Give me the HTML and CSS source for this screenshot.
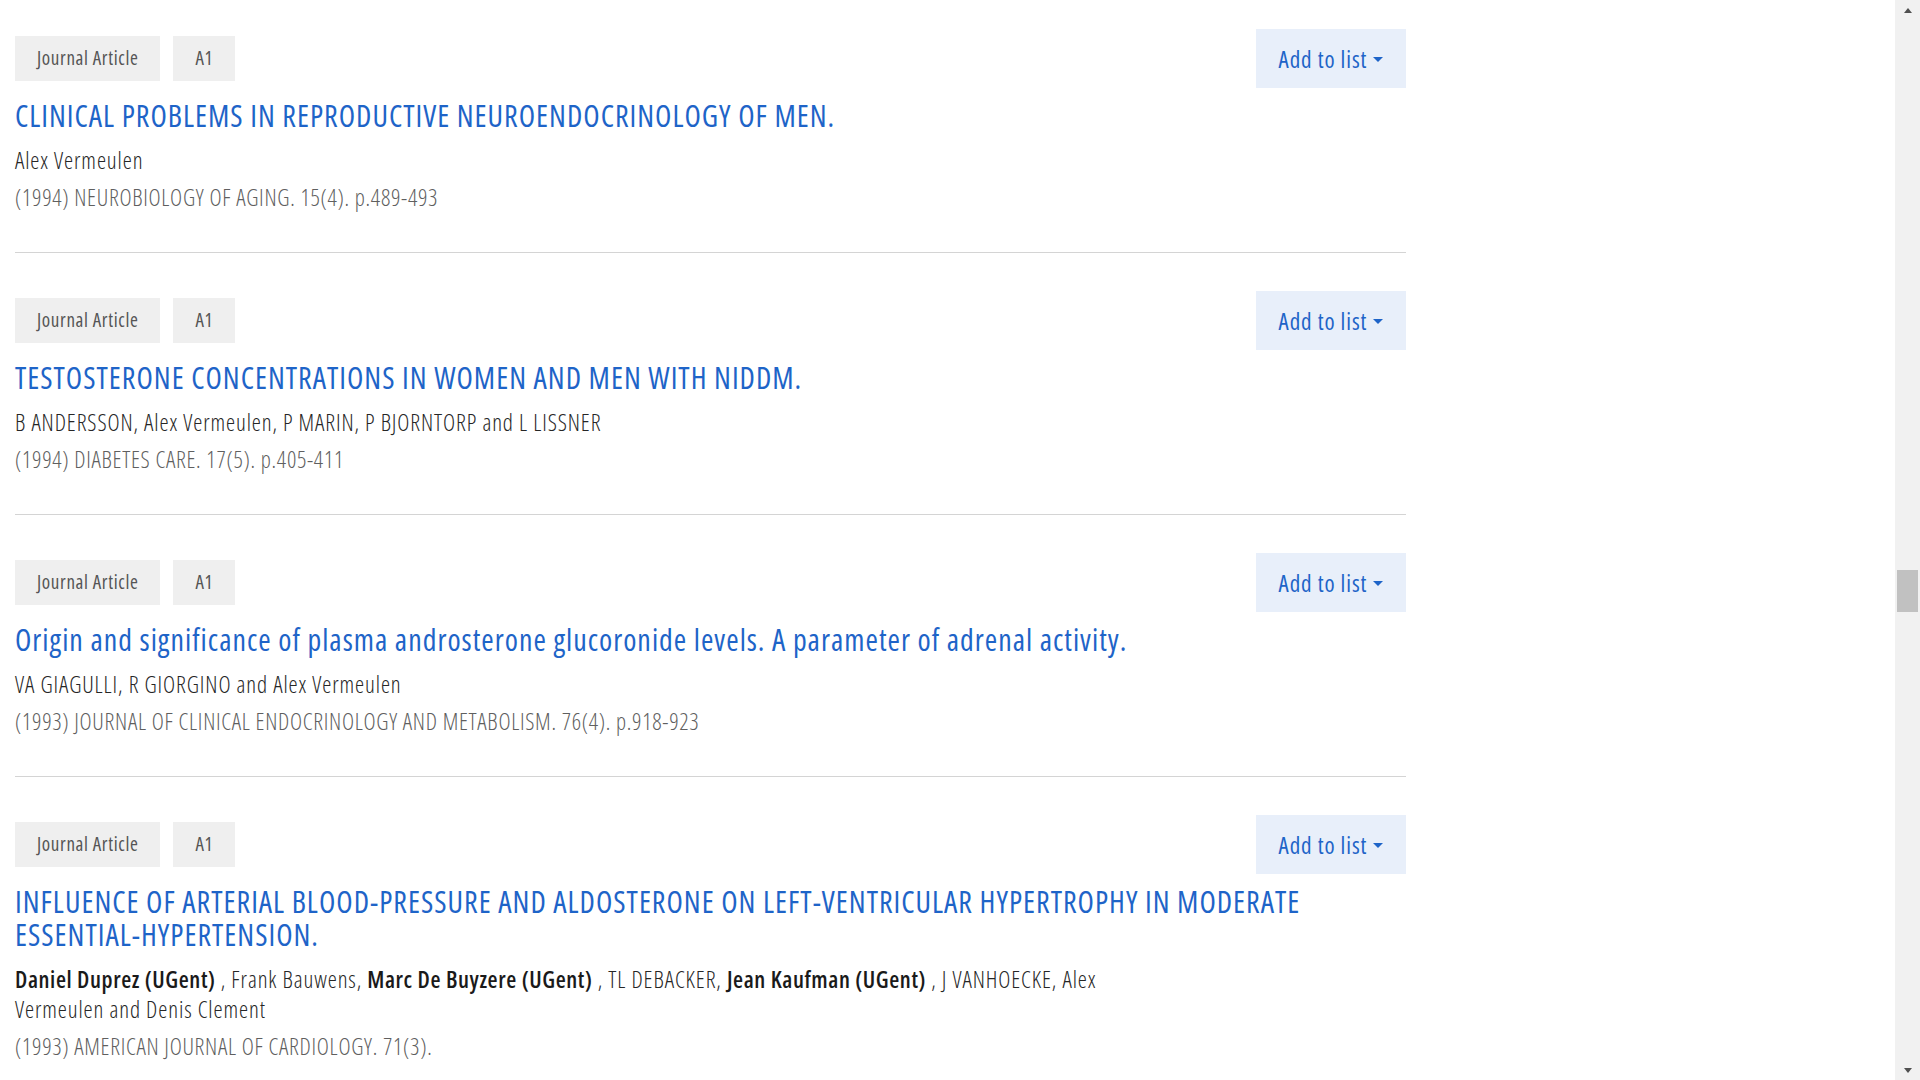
FILE: index.html
```html
<!DOCTYPE html>
<html lang="en">
<head>
  <meta charset="UTF-8" />
  <meta name="viewport" content="width=device-width, initial-scale=1.0"/>
  <title>Biblio | Publications</title>
  <link rel="stylesheet" href="styles.css">
</head>
<body>
  <div class="page">
    <main class="main">
      <div class="results">

        <div class="result">
          <div class="result-head">
            <div class="tags">
              <span class="tag">Journal Article</span>
              <span class="tag">A1</span>
            </div>
            <button class="add-btn">Add to list <span class="caret"></span></button>
          </div>
          <h3 class="result-title"><a href="#">CLINICAL PROBLEMS IN REPRODUCTIVE NEUROENDOCRINOLOGY OF MEN.</a></h3>
          <p class="authors">Alex Vermeulen</p>
          <p class="citation">(1994) NEUROBIOLOGY OF AGING. 15(4). p.489-493</p>
        </div>

        <div class="result">
          <div class="result-head">
            <div class="tags">
              <span class="tag">Journal Article</span>
              <span class="tag">A1</span>
            </div>
            <button class="add-btn">Add to list <span class="caret"></span></button>
          </div>
          <h3 class="result-title"><a href="#">TESTOSTERONE CONCENTRATIONS IN WOMEN AND MEN WITH NIDDM.</a></h3>
          <p class="authors">B ANDERSSON, Alex Vermeulen, P MARIN, P BJORNTORP and L LISSNER</p>
          <p class="citation">(1994) DIABETES CARE. 17(5). p.405-411</p>
        </div>

        <div class="result">
          <div class="result-head">
            <div class="tags">
              <span class="tag">Journal Article</span>
              <span class="tag">A1</span>
            </div>
            <button class="add-btn">Add to list <span class="caret"></span></button>
          </div>
          <h3 class="result-title"><a href="#">Origin and significance of plasma androsterone glucoronide levels. A parameter of adrenal activity.</a></h3>
          <p class="authors">VA GIAGULLI, R GIORGINO and Alex Vermeulen</p>
          <p class="citation">(1993) JOURNAL OF CLINICAL ENDOCRINOLOGY AND METABOLISM. 76(4). p.918-923</p>
        </div>

        <div class="result">
          <div class="result-head">
            <div class="tags">
              <span class="tag">Journal Article</span>
              <span class="tag">A1</span>
            </div>
            <button class="add-btn">Add to list <span class="caret"></span></button>
          </div>
          <h3 class="result-title"><a href="#">INFLUENCE OF ARTERIAL BLOOD-PRESSURE AND ALDOSTERONE ON LEFT-VENTRICULAR HYPERTROPHY IN MODERATE ESSENTIAL-HYPERTENSION.</a></h3>
          <p class="authors"><strong>Daniel Duprez (UGent)</strong> , Frank Bauwens, <strong>Marc De Buyzere (UGent)</strong> , TL DEBACKER, <strong>Jean Kaufman (UGent)</strong> , J VANHOECKE, Alex Vermeulen and Denis Clement</p>
          <p class="citation">(1993) AMERICAN JOURNAL OF CARDIOLOGY. 71(3).</p>
        </div>

      </div>
    </main>

    <div class="scrollbar">
      <div class="scroll-arrow"><span class="arrow-up"></span></div>
      <div class="scroll-track"><div class="scroll-thumb"></div></div>
      <div class="scroll-arrow"><span class="arrow-down"></span></div>
    </div>
  </div>
</body>
</html>
```

FILE: styles.css
```css
:root {
  --blue: #1e64c8;
  --blue-light: #e8effa;
  --text: #262626;
  --muted: #5f5f5f;
  --tag-bg: #efefef;
  --line: #d4d4d4;
}

* {
  margin: 0;
  padding: 0;
  box-sizing: border-box;
}

body {
  font-family: 'Open Sans', 'Liberation Sans', sans-serif;
  font-stretch: condensed;
  font-weight: 300;
  color: var(--text);
  background: #fff;
  height: 100vh;
  overflow: hidden;
}

.page {
  display: flex;
  height: 100vh;
}

.main {
  flex: 1;
  overflow: hidden;
}

.results {
  width: 75%;
  padding: 0 15px;
  margin-top: -9px;
}

.result {
  padding: 38px 0 40px;
  border-bottom: 1px solid var(--line);
}

.result-head {
  display: flex;
  justify-content: space-between;
  align-items: center;
  margin-bottom: 11px;
}

.tags {
  display: flex;
  gap: 13px;
}

.tag {
  display: inline-block;
  background: var(--tag-bg);
  color: #555;
  font-size: 19px;
  font-weight: 400;
  letter-spacing: 0.65px;
  line-height: 45px;
  height: 45px;
  padding: 0 22px;
}

.add-btn {
  font-family: inherit;
  font-stretch: inherit;
  font-weight: 400;
  font-size: 23px;
  letter-spacing: 0.9px;
  color: var(--blue);
  background: var(--blue-light);
  border: none;
  height: 59px;
  padding: 0 23px;
  display: flex;
  align-items: center;
  gap: 6px;
  cursor: pointer;
}

.caret {
  display: inline-block;
  width: 0;
  height: 0;
  border-top: 5px solid var(--blue);
  border-left: 5px solid transparent;
  border-right: 5px solid transparent;
  margin-top: 2px;
}

.result-title {
  font-size: 30px;
  font-weight: 400;
  letter-spacing: 1px;
  line-height: 33px;
  margin-bottom: 13px;
}

.result-title a {
  color: var(--blue);
  text-decoration: none;
}

.authors {
  font-size: 23px;
  letter-spacing: 0.9px;
  line-height: 30px;
  max-width: 1154px;
  color: var(--text);
}

.authors strong {
  font-weight: 600;
  letter-spacing: 0.6px;
  color: #1a1a1a;
}

.citation {
  font-size: 23px;
  letter-spacing: 0.7px;
  line-height: 30px;
  margin-top: 7px;
  color: var(--muted);
}

/* fake browser scrollbar, page is shown scrolled half way */
.scrollbar {
  width: 25px;
  background: #f1f1f1;
  display: flex;
  flex-direction: column;
}

.scroll-arrow {
  height: 20px;
  display: flex;
  align-items: center;
  justify-content: center;
}

.arrow-up,
.arrow-down {
  width: 0;
  height: 0;
  border-left: 4px solid transparent;
  border-right: 4px solid transparent;
}

.arrow-up {
  border-bottom: 5px solid #505050;
}

.arrow-down {
  border-top: 5px solid #505050;
}

.scroll-track {
  flex: 1;
  padding: 0 2px;
}

.scroll-thumb {
  height: 42px;
  margin-top: 550px;
  background: #c1c1c1;
}
```
